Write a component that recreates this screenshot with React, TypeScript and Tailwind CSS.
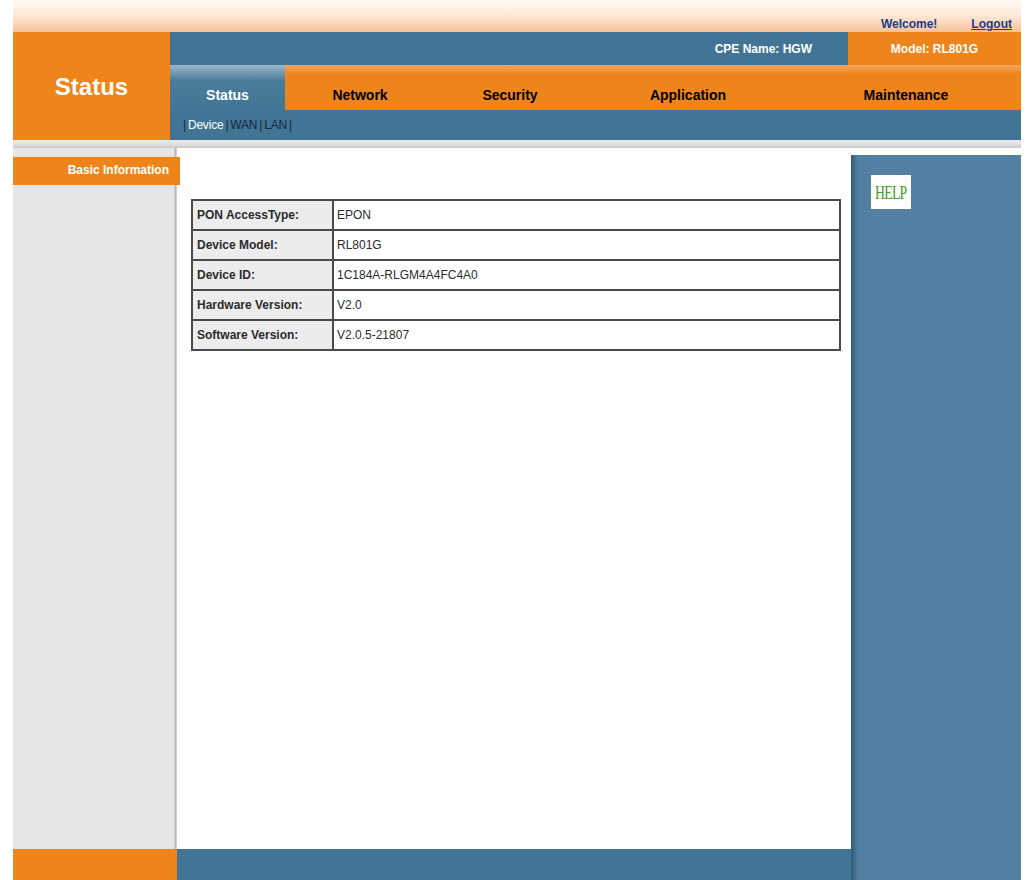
import React from 'react';

const TABS = [
  { label: 'Network', w: 'w-[150px]' },
  { label: 'Security', w: 'w-[150px]' },
  { label: 'Application', w: 'w-[206px]' },
  { label: 'Maintenance', w: 'flex-1' },
];

const ROWS: [string, string][] = [
  ['PON AccessType:', 'EPON'],
  ['Device Model:', 'RL801G'],
  ['Device ID:', '1C184A-RLGM4A4FC4A0'],
  ['Hardware Version:', 'V2.0'],
  ['Software Version:', 'V2.0.5-21807'],
];

export default function App() {
  return (
    <div className="min-h-[880px] bg-white font-['Liberation_Sans',Arial,sans-serif]">
      <div className="ml-[13px] w-[1008px]">
        {/* top gradient band */}
        <div className="flex h-[32px] items-start justify-end bg-gradient-to-b from-[#fffaf6] via-[#fde8d6] to-[#f6c296] pt-[17px] text-[12px] font-bold leading-[14px]">
          <span className="mr-[34px] text-[#1f3c88]">Welcome!</span>
          <a href="#" className="mr-[9px] text-[#1f3c88] underline">Logout</a>
        </div>

        {/* header */}
        <div className="flex">
          <div className="flex h-[108px] w-[157px] items-center justify-center bg-[#ee851a] pt-[2px] text-[24px] font-bold text-white">
            Status
          </div>
          <div className="flex-1">
            <div className="flex h-[33px] text-[12px] font-bold text-white">
              <div className="flex flex-1 items-center justify-end bg-[#427595] pr-[36px]">CPE Name: HGW</div>
              <div className="flex w-[173px] items-center justify-center bg-[#ee851a]">Model: RL801G</div>
            </div>
            <div className="flex h-[45px] text-[14px] font-bold">
              <div className="flex w-[115px] items-end justify-center bg-gradient-to-b from-[#9bb6c9] via-[#4a7b9b] via-[35%] to-[#427595] pb-[4px] text-white">
                Status
              </div>
              <div className="flex flex-1 bg-gradient-to-b from-[#f5a45a] via-[#ee851a] via-[20%] to-[#ee851a] text-black">
                {TABS.map((t) => (
                  <div key={t.label} className={`${t.w} flex items-end justify-center pb-[4px]`}>{t.label}</div>
                ))}
              </div>
            </div>
            <div className="flex h-[30px] items-center bg-[#427595] pl-[13px] text-[12px] tracking-[-0.2px] text-[#16273f]">
              <span>|</span>
              <span className="ml-[2px] text-white">Device</span>
              <span className="mx-[2px]">|</span>
              <span>WAN</span>
              <span className="mx-[2px]">|</span>
              <span>LAN</span>
              <span className="ml-[2px]">|</span>
            </div>
          </div>
        </div>

        {/* gray strip */}
        <div className="h-[8px] bg-gradient-to-b from-[#e9e9e9] via-[#e2e2e2] to-[#c9c9c9]" />

        {/* body */}
        <div className="flex">
          <div className="w-[838px]">
            <div className="flex h-[701px]">
              <div className="relative w-[161px] bg-[#e6e6e6]">
                <div className="absolute left-0 top-[9px] z-10 flex h-[28px] w-[167px] items-center justify-end bg-[#ee851a] pb-[2px] pr-[11px] text-[12px] font-bold text-white">
                  Basic Information
                </div>
              </div>
              <div className="w-[3px] bg-gradient-to-r from-[#d6d6d6] via-[#b9b9b9] to-[#dcdcdc]" />
              <div className="flex-1 bg-white pl-[14px] pt-[51px]">
                <table className="w-[650px] border-collapse border-2 border-[#4a4a4a] text-[12px] text-[#2b2b2b]">
                  <tbody>
                    {ROWS.map(([k, v]) => (
                      <tr key={k} className="h-[30px]">
                        <td className="w-[141px] border-2 border-[#4a4a4a] bg-[#ececec] pl-[4px] font-bold">{k}</td>
                        <td className="border-2 border-[#4a4a4a] bg-white pl-[3px]">{v}</td>
                      </tr>
                    ))}
                  </tbody>
                </table>
              </div>
            </div>
            <div className="flex h-[31px]">
              <div className="w-[164px] bg-[#ee851a]" />
              <div className="flex-1 bg-[#427595]" />
            </div>
          </div>
          <div className="flex w-[170px] flex-col bg-white pt-[7px]">
            <div className="flex flex-1 bg-[#5380a2]">
              <div className="w-[7px] bg-gradient-to-r from-[#2f5a78] to-[#5380a2]" />
              <div className="pl-[13px] pt-[20px]">
                <div className="flex h-[34px] w-[40px] items-center justify-center overflow-hidden bg-white">
                  <span className="inline-block scale-x-[0.72] font-['Liberation_Serif',serif] text-[19px] leading-none tracking-[-1px] text-[#3c9a32]">
                    HELP
                  </span>
                </div>
              </div>
            </div>
          </div>
        </div>
      </div>
    </div>
  );
}
